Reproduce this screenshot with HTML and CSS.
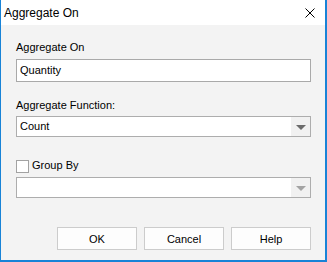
FILE: index.html
```html
<!DOCTYPE html>
<html>
<head>
    <title>Aggregate On</title>
    <link rel="stylesheet" href="styles.css">
</head>
<body>
    <div class="window">
        <div class="titlebar">
            <span class="title">Aggregate On</span>
            <svg class="close" width="10" height="10" viewBox="0 0 10 10">
                <path d="M0.5 0.5 L9.5 9.5 M9.5 0.5 L0.5 9.5" stroke="#000" stroke-width="1" fill="none"/>
            </svg>
        </div>
        <div class="content">
            <div class="label">Aggregate On</div>
            <div class="textbox">Quantity</div>

            <div class="label label-func">Aggregate Function:</div>
            <div class="select">
                <span class="select-value">Count</span>
                <span class="select-btn"><span class="arrow"></span></span>
            </div>

            <div class="check-row">
                <span class="checkbox"></span>
                <span>Group By</span>
            </div>
            <div class="select select-disabled">
                <span class="select-value"></span>
                <span class="select-btn"><span class="arrow"></span></span>
            </div>

            <div class="buttons">
                <button class="btn">OK</button>
                <button class="btn">Cancel</button>
                <button class="btn">Help</button>
            </div>
        </div>
    </div>
</body>
</html>
```

FILE: styles.css
```css
/* General */
body {
    margin: 0;
    padding: 0;
    font-family: "Liberation Sans", Arial, sans-serif;
    font-size: 11px;
    color: #000;
}

.window {
    width: 327px;
    height: 262px;
    box-sizing: border-box;
    border-left: 1px solid #1883d7;
    border-right: 2px solid #1883d7;
    border-bottom: 2px solid #1883d7;
    display: flex;
    flex-direction: column;
    background: #f3f3f3;
}

/* Title bar */
.titlebar {
    height: 25px;
    flex: none;
    background: #fff;
    display: flex;
    align-items: center;
    justify-content: space-between;
    padding: 0 10px 0 3px;
}

.title {
    font-size: 12px;
    line-height: 14px;
}

.close {
    display: block;
    margin-top: 1px;
}

/* Content */
.content {
    flex: 1;
    padding: 16px 14px 0 15px;
}

.label {
    line-height: 13px;
    margin-bottom: 5px;
}

.label-func {
    margin-top: 17px;
    margin-bottom: 4px;
}

.textbox {
    height: 21px;
    line-height: 21px;
    border: 1px solid #a9a9a9;
    background: #fff;
    padding-left: 3px;
}

.select {
    height: 19px;
    border: 1px solid #adadad;
    background: #fff;
    display: flex;
}

.select-value {
    flex: 1;
    line-height: 19px;
    padding-left: 3px;
}

.select-btn {
    width: 19px;
    background: #f1f1f1;
    display: flex;
    align-items: center;
    justify-content: center;
}

.arrow {
    width: 0;
    height: 0;
    border-left: 5px solid transparent;
    border-right: 5px solid transparent;
    border-top: 5px solid #6b6b6b;
    margin-top: 1px;
}

.select-disabled .arrow {
    border-top-color: #a3a3a3;
}

/* Checkbox row */
.check-row {
    margin-top: 21px;
    height: 15px;
    line-height: 15px;
    display: flex;
    align-items: center;
    gap: 3px;
    margin-bottom: 4px;
}

.checkbox {
    width: 11px;
    height: 11px;
    border: 1px solid #a2a2a2;
    background: #fff;
    margin-top: 1px;
}

/* Buttons */
.buttons {
    margin-top: 29px;
    display: flex;
    justify-content: flex-end;
    gap: 7px;
}

.btn {
    width: 80px;
    height: 23px;
    border: 1px solid #cccccc;
    background: #fdfdfd;
    font-family: "Liberation Sans", Arial, sans-serif;
    font-size: 11px;
    color: #000;
    padding: 0;
}
```
